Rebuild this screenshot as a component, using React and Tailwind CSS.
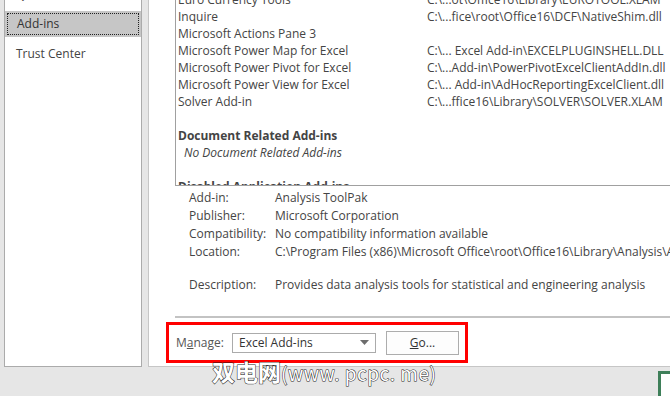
import React from "react";

const font = { fontFamily: '"Open Sans", "Noto Sans", sans-serif' };

const addins = [
  ["Euro Currency Tools", "C:\\...ot\\Office16\\Library\\EUROTOOL.XLAM"],
  ["Inquire", "C:\\...fice\\root\\Office16\\DCF\\NativeShim.dll"],
  ["Microsoft Actions Pane 3", ""],
  ["Microsoft Power Map for Excel", "C:\\... Excel Add-in\\EXCELPLUGINSHELL.DLL"],
  ["Microsoft Power Pivot for Excel", "C:\\...Add-in\\PowerPivotExcelClientAddIn.dll"],
  ["Microsoft Power View for Excel", "C:\\... Add-in\\AdHocReportingExcelClient.dll"],
  ["Solver Add-in", "C:\\...ffice16\\Library\\SOLVER\\SOLVER.XLAM"],
];

const details = [
  ["Add-in:", "Analysis ToolPak"],
  ["Publisher:", "Microsoft Corporation"],
  ["Compatibility:", "No compatibility information available"],
  ["Location:", "C:\\Program Files (x86)\\Microsoft Office\\root\\Office16\\Library\\Analysis\\ANALYS32.XLL"],
];

export default function App() {
  return (
    <div
      className="relative w-[670px] h-[396px] overflow-hidden bg-[#e6e6e6] text-[12px] text-[#444444]"
      style={font}
    >
      <div className="flex h-[367px] pl-[4px]">
        {/* Left nav */}
        <div className="w-[138px] shrink-0 h-full bg-white border-x border-b border-[#ababab] overflow-hidden">
          <div className="h-[11px] relative">
            <div className="absolute left-[11px] top-[-14px] leading-[17px] whitespace-nowrap">Quick Access Toolbar</div>
          </div>
          <div className="h-[26px] bg-[#c6c6c6] p-[2px]">
            <div className="h-full border border-dotted border-[#222] flex items-center pl-[9px] text-[#333]">Add-ins</div>
          </div>
          <div className="h-[32px] flex items-center pl-[11px] pt-[2px]">Trust Center</div>
        </div>

        {/* Right content */}
        <div className="ml-[6px] w-[560px] shrink-0 h-full bg-white border-l border-b border-[#c6c6c6] flex flex-col pl-[26px] overflow-hidden">
          <div className="h-[186px] border-l border-b border-[#a0a0a0] overflow-hidden">
            <div className="mt-[-9px] pl-[2px]">
              {addins.map(([n, p]) => (
                <div key={n} className="flex h-[17px] items-center whitespace-nowrap">
                  <div className="w-[249px] shrink-0">{n}</div>
                  <div>{p}</div>
                </div>
              ))}
              <div className="h-[17px]" />
              <div className="h-[17px] flex items-center font-bold">Document Related Add-ins</div>
              <div className="h-[17px] flex items-center italic pl-[6px]">No Document Related Add-ins</div>
              <div className="h-[17px]" />
              <div className="h-[17px] flex items-center font-bold">Disabled Application Add-ins</div>
            </div>
          </div>

          <div className="pt-[3px] pl-[14px] whitespace-nowrap">
            {details.map(([l, v]) => (
              <div key={l} className="flex h-[18px] items-center">
                <div className="w-[86px] shrink-0">{l}</div>
                <div>{v}</div>
              </div>
            ))}
            <div className="flex h-[18px] items-center mt-[15px]">
              <div className="w-[86px] shrink-0">Description:</div>
              <div>Provides data analysis tools for statistical and engineering analysis</div>
            </div>
          </div>

          <div className="mt-[22px] h-[2px] bg-[#c3c3c3]" />

          <div className="mt-[4px] ml-[-9px] w-[302px] h-[41px] border-[3px] border-[#ff0000] flex items-center shrink-0">
            <div className="ml-[7px] w-[56px] text-[#555]">
              M<span className="underline">a</span>nage:
            </div>
            <div className="w-[144px] h-[20px] border border-[#ababab] flex items-center justify-between pl-[6px] pr-[6px] text-[#333]">
              <span>Excel Add-ins</span>
              <svg width="9" height="5" viewBox="0 0 9 5">
                <path d="M0 0 L9 0 L4.5 5 Z" fill="#6d6d6d" />
              </svg>
            </div>
            <div className="ml-[10px] w-[73px] h-[24px] border border-[#adadad] bg-[#fdfdfd] flex items-center justify-center text-[#333]">
              <span><span className="underline">G</span>o...</span>
            </div>
          </div>
        </div>
      </div>

      {/* Watermark overlay */}
      <div
        className="absolute left-[212px] top-[358px] leading-[26px] text-white whitespace-nowrap font-bold [-webkit-text-stroke:1px_#1a1a1a] [paint-order:stroke_fill] flex items-baseline"
        style={{ fontFamily: '"Noto Sans CJK SC", "DejaVu Sans", sans-serif' }}
      >
        <span className="text-[23px]">双电网</span>
        <span className="text-[19px] font-normal tracking-[0.5px]">(www. pcpc. me)</span>
      </div>

      {/* green corner box */}
      <div className="absolute left-[658px] top-[371px] w-[20px] h-[30px] bg-white border-[3px] border-[#3e7f59]" />
    </div>
  );
}
